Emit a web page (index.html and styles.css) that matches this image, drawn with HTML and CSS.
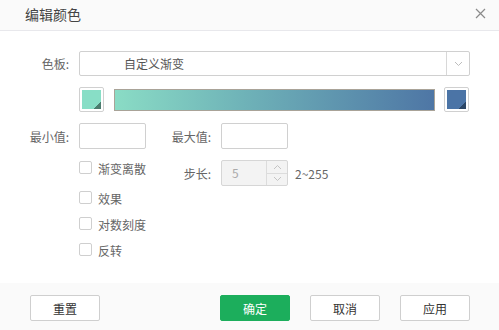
FILE: index.html
```html
<!DOCTYPE html>
<html lang="zh">
<head>
<meta charset="utf-8">
<title>编辑颜色</title>
<link rel="stylesheet" href="styles.css">
</head>
<body>
<div class="dialog">
  <div class="header">
    <span class="title">编辑颜色</span>
    <svg class="close" width="11" height="11" viewBox="0 0 11 11"><path d="M1 1L10 10M10 1L1 10" stroke="#8a8a8a" stroke-width="1.2" fill="none"/></svg>
  </div>
  <div class="body">
    <div class="row row-select">
      <span class="lbl">色板:</span>
      <div class="select">
        <span class="select-text">自定义渐变</span>
        <span class="select-arrow"><svg width="9" height="6" viewBox="0 0 9 6"><path d="M1 1L4.5 4.5L8 1" stroke="#bdbdbd" stroke-width="1" fill="none"/></svg></span>
      </div>
    </div>
    <div class="row row-swatch">
      <span class="lbl"></span>
      <div class="swatch"><div class="swatch-inner start"></div></div>
      <div class="gradient"></div>
      <div class="swatch"><div class="swatch-inner end"></div></div>
    </div>
    <div class="row row-range">
      <span class="lbl">最小值:</span>
      <div class="input"></div>
      <span class="lbl lbl2">最大值:</span>
      <div class="input"></div>
    </div>
    <div class="row row-step">
      <span class="lbl"></span>
      <div class="cell">
        <label class="check"><span class="box"></span><span class="check-text">渐变离散</span></label>
      </div>
      <span class="lbl lbl2">步长:</span>
      <div class="spinner">
        <span class="spin-value">5</span>
        <span class="spin-btns">
          <span class="spin-btn"><svg width="9" height="6" viewBox="0 0 9 6"><path d="M1 5L4.5 1.5L8 5" stroke="#c4c4c4" stroke-width="1" fill="none"/></svg></span>
          <span class="spin-btn"><svg width="9" height="6" viewBox="0 0 9 6"><path d="M1 1L4.5 4.5L8 1" stroke="#c4c4c4" stroke-width="1" fill="none"/></svg></span>
        </span>
      </div>
      <span class="hint">2~255</span>
    </div>
    <div class="row row-check">
      <span class="lbl"></span>
      <label class="check"><span class="box"></span><span class="check-text">效果</span></label>
    </div>
    <div class="row row-check">
      <span class="lbl"></span>
      <label class="check"><span class="box"></span><span class="check-text">对数刻度</span></label>
    </div>
    <div class="row row-check">
      <span class="lbl"></span>
      <label class="check"><span class="box"></span><span class="check-text">反转</span></label>
    </div>
  </div>
  <div class="footer">
    <button class="btn">重置</button>
    <span class="spacer"></span>
    <button class="btn btn-primary">确定</button>
    <button class="btn">取消</button>
    <button class="btn">应用</button>
  </div>
</div>
</body>
</html>
```

FILE: styles.css
```css
* { box-sizing: border-box; }
html, body { margin: 0; padding: 0; background: #fff; }
body {
  font-family: "Noto Sans CJK SC", "Noto Sans", sans-serif;
  font-size: 12px;
  color: #666;
}
.dialog {
  width: 499px;
  height: 330px;
  display: flex;
  flex-direction: column;
}
.header {
  height: 31px;
  background: #fafafa;
  border-bottom: 1px solid #e8e8ec;
  display: flex;
  align-items: center;
  padding: 0 13px 2px 25px;
}
.title {
  flex: 1;
  font-size: 14px;
  color: #444;
  line-height: 20px;
}
.close { display: block; margin-top: -2px; }
.body {
  flex: 1;
  padding-top: 20px;
}
.row {
  display: flex;
  align-items: center;
}
.lbl {
  width: 69px;
  margin-right: 10px;
  text-align: right;
  color: #666;
  flex: none;
}
.lbl2 { width: 65px; }
.row-select { height: 25px; }
.select {
  width: 391px;
  height: 25px;
  border: 1px solid #d0d0d0;
  border-radius: 2px;
  display: flex;
  align-items: center;
}
.select-text {
  flex: 1;
  padding-left: 44px;
  color: #555;
}
.select-arrow {
  width: 23px;
  height: 100%;
  border-left: 1px solid #d8d8d8;
  display: flex;
  align-items: center;
  justify-content: center;
}
.select-arrow svg { display: block; }
.row-swatch { margin-top: 11px; height: 25px; }
.swatch {
  width: 25px;
  height: 25px;
  border: 1px solid #d0d0d0;
  border-radius: 2px;
  padding: 2px;
  flex: none;
}
.swatch-inner { width: 100%; height: 100%; }
.swatch-inner.start { background: linear-gradient(135deg, #88dec6 80%, #4c7c6e 80%); }
.swatch-inner.end { background: linear-gradient(135deg, #4b74a6 80%, #2b4666 80%); }
.gradient {
  width: 321px;
  height: 22px;
  margin: 0 9px 0 10px;
  border: 1px solid #a9a398;
  background: linear-gradient(90deg, #8adcc5 0%, #6fb3b8 40%, #4e76a5 100%);
}
.row-range { margin-top: 11px; height: 26px; }
.input {
  width: 67px;
  height: 26px;
  border: 1px solid #d0d0d0;
  border-radius: 2px;
  background: #fff;
  flex: none;
}
.row-step { margin-top: 11px; height: 26px; margin-bottom: 4px; }
.cell { width: 67px; align-self: flex-start; padding-top: 1px; }
.check {
  display: flex;
  align-items: center;
  height: 13px;
  white-space: nowrap;
}
.box {
  width: 13px;
  height: 13px;
  border: 1px solid #cfcfcf;
  border-radius: 2px;
  background: #fff;
  flex: none;
}
.check-text { margin-left: 6px; color: #666; line-height: 13px; position: relative; top: 1px; }
.spinner {
  width: 67px;
  height: 26px;
  border: 1px solid #d6d6d6;
  border-radius: 2px;
  background: #f3f3f3;
  display: flex;
  flex: none;
}
.spin-value { flex: 1; padding-left: 10px; line-height: 24px; color: #aaa; }
.spin-btns {
  width: 21px;
  border-left: 1px solid #dcdcdc;
  display: flex;
  flex-direction: column;
}
.spin-btn {
  flex: 1;
  display: flex;
  align-items: center;
  justify-content: center;
}
.spin-btn + .spin-btn { border-top: 1px solid #dcdcdc; }
.spin-btn svg { display: block; }
.hint { margin-left: 7px; color: #666; }
.row-check { height: 26px; align-items: flex-start; padding-top: 1px; }
.footer {
  height: 47px;
  background: #fafafa;
  display: flex;
  align-items: flex-start;
  padding: 12px 29px 0 30px;
  gap: 20px;
}
.spacer { flex: 1; }
.btn {
  width: 70px;
  height: 26px;
  border: 1px solid #cfcfcf;
  border-radius: 2px;
  background: #fff;
  font-family: "Noto Sans CJK SC", "Noto Sans", sans-serif;
  font-size: 12px;
  color: #333;
  padding: 0;
}
.btn-primary {
  background: #1cae5c;
  border-color: #1cae5c;
  color: #fff;
}
```
